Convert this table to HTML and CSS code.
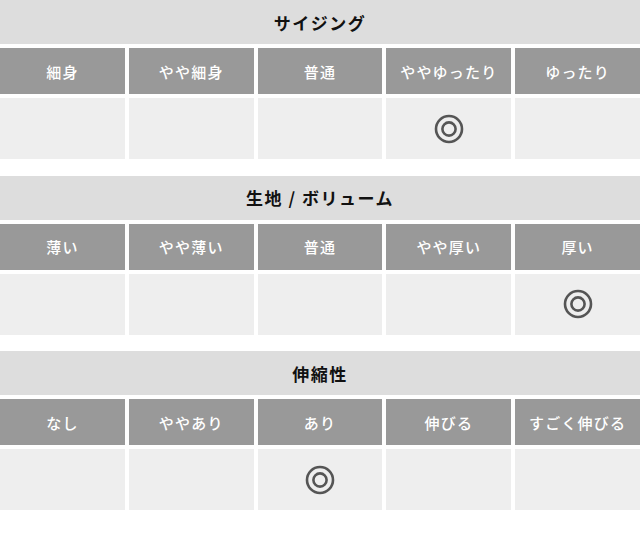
FILE: index.html
```html
<!DOCTYPE html>
<html lang="ja">
<head>
<meta charset="utf-8">
<link rel="stylesheet" href="styles.css">
</head>
<body>
<div class="page">
  <section class="spec">
    <h2 class="spec-title">サイジング</h2>
    <div class="row labels">
      <div class="cell">細身</div>
      <div class="cell">やや細身</div>
      <div class="cell">普通</div>
      <div class="cell">ややゆったり</div>
      <div class="cell">ゆったり</div>
    </div>
    <div class="row marks">
      <div class="cell"></div>
      <div class="cell"></div>
      <div class="cell"></div>
      <div class="cell"><svg class="mark" viewBox="0 0 30 30"><circle cx="15" cy="15" r="13"/><circle cx="15" cy="15" r="6.6"/></svg></div>
      <div class="cell"></div>
    </div>
  </section>
  <section class="spec">
    <h2 class="spec-title">生地 / ボリューム</h2>
    <div class="row labels">
      <div class="cell">薄い</div>
      <div class="cell">やや薄い</div>
      <div class="cell">普通</div>
      <div class="cell">やや厚い</div>
      <div class="cell">厚い</div>
    </div>
    <div class="row marks">
      <div class="cell"></div>
      <div class="cell"></div>
      <div class="cell"></div>
      <div class="cell"></div>
      <div class="cell"><svg class="mark" viewBox="0 0 30 30"><circle cx="15" cy="15" r="13"/><circle cx="15" cy="15" r="6.6"/></svg></div>
    </div>
  </section>
  <section class="spec">
    <h2 class="spec-title">伸縮性</h2>
    <div class="row labels">
      <div class="cell">なし</div>
      <div class="cell">ややあり</div>
      <div class="cell">あり</div>
      <div class="cell">伸びる</div>
      <div class="cell">すごく伸びる</div>
    </div>
    <div class="row marks">
      <div class="cell"></div>
      <div class="cell"></div>
      <div class="cell"><svg class="mark" viewBox="0 0 30 30"><circle cx="15" cy="15" r="13"/><circle cx="15" cy="15" r="6.6"/></svg></div>
      <div class="cell"></div>
      <div class="cell"></div>
    </div>
  </section>
</div>
</body>
</html>
```

FILE: styles.css
```css
html, body {
  margin: 0;
  padding: 0;
  background: #ffffff;
}

body {
  font-family: "Noto Sans CJK JP", "Noto Sans", sans-serif;
}

.page {
  display: flex;
  flex-direction: column;
  gap: 16.5px;
}

.spec {
  display: flex;
  flex-direction: column;
  gap: 4px;
}

.spec-title {
  margin: 0;
  height: 44px;
  background: #dddddd;
  color: #111111;
  font-size: 17px;
  font-weight: 700;
  letter-spacing: 1.5px;
  display: flex;
  align-items: center;
  justify-content: center;
}

.row {
  display: grid;
  grid-template-columns: repeat(5, 1fr);
  gap: 4px;
}

.cell {
  display: flex;
  align-items: center;
  justify-content: center;
}

.labels .cell {
  height: 46px;
  background: #999999;
  color: #ffffff;
  font-size: 15px;
  font-weight: 500;
  letter-spacing: 1.2px;
}

.marks .cell {
  height: 61px;
  background: #eeeeee;
}

.mark {
  width: 30px;
  height: 30px;
  fill: none;
  stroke: #555555;
  stroke-width: 2.6;
}
```
